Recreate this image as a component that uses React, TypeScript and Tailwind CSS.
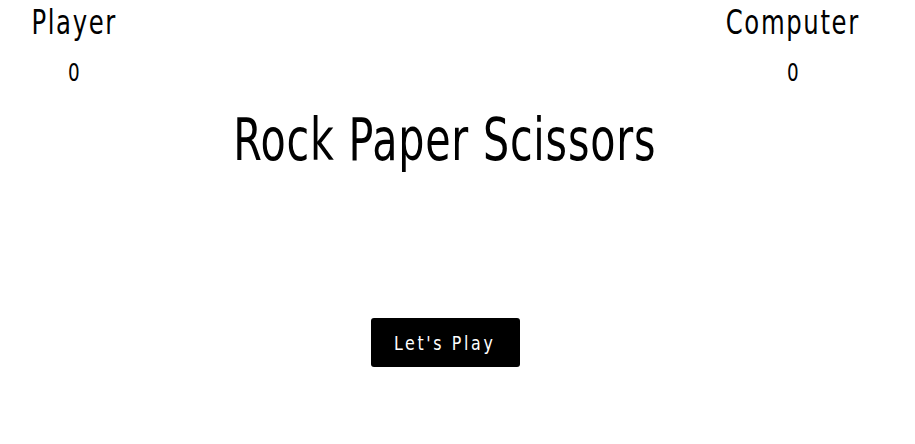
const font = { fontFamily: '"Liberation Sans Narrow", "DejaVu Sans Condensed", sans-serif' };

function Score({ label, score, className }: { label: string; score: number; className: string }) {
  return (
    <div className={`flex flex-col items-center ${className}`}>
      <h2 className="pt-[3px] text-[33px] leading-[40px] tracking-[2px] text-black">
        <span className="inline-block scale-x-[0.82]">{label}</span>
      </h2>
      <p className="mt-[15px] text-[24px] leading-[30px] text-black">
        <span className="inline-block scale-x-[0.85]">{score}</span>
      </p>
    </div>
  );
}

export default function App() {
  return (
    <div className="h-[444px] w-[915px] bg-white" style={font}>
      <div className="flex">
        <Score label="Player" score={0} className="w-[148px]" />
        <Score label="Computer" score={0} className="ml-auto mr-[42px] w-[160px]" />
      </div>
      <div className="flex w-[890px] flex-col items-center">
        <h1 className="mt-[17px] text-[58px] leading-[70px] tracking-[1px] text-black">
          <span className="inline-block scale-x-[0.79]">Rock Paper Scissors</span>
        </h1>
        <button className="mt-[143px] flex h-[49px] w-[149px] items-center justify-center rounded-[3px] bg-black text-[20px] tracking-[3px] text-white">
          <span className="inline-block scale-x-[0.88]">Let's Play</span>
        </button>
      </div>
    </div>
  );
}
